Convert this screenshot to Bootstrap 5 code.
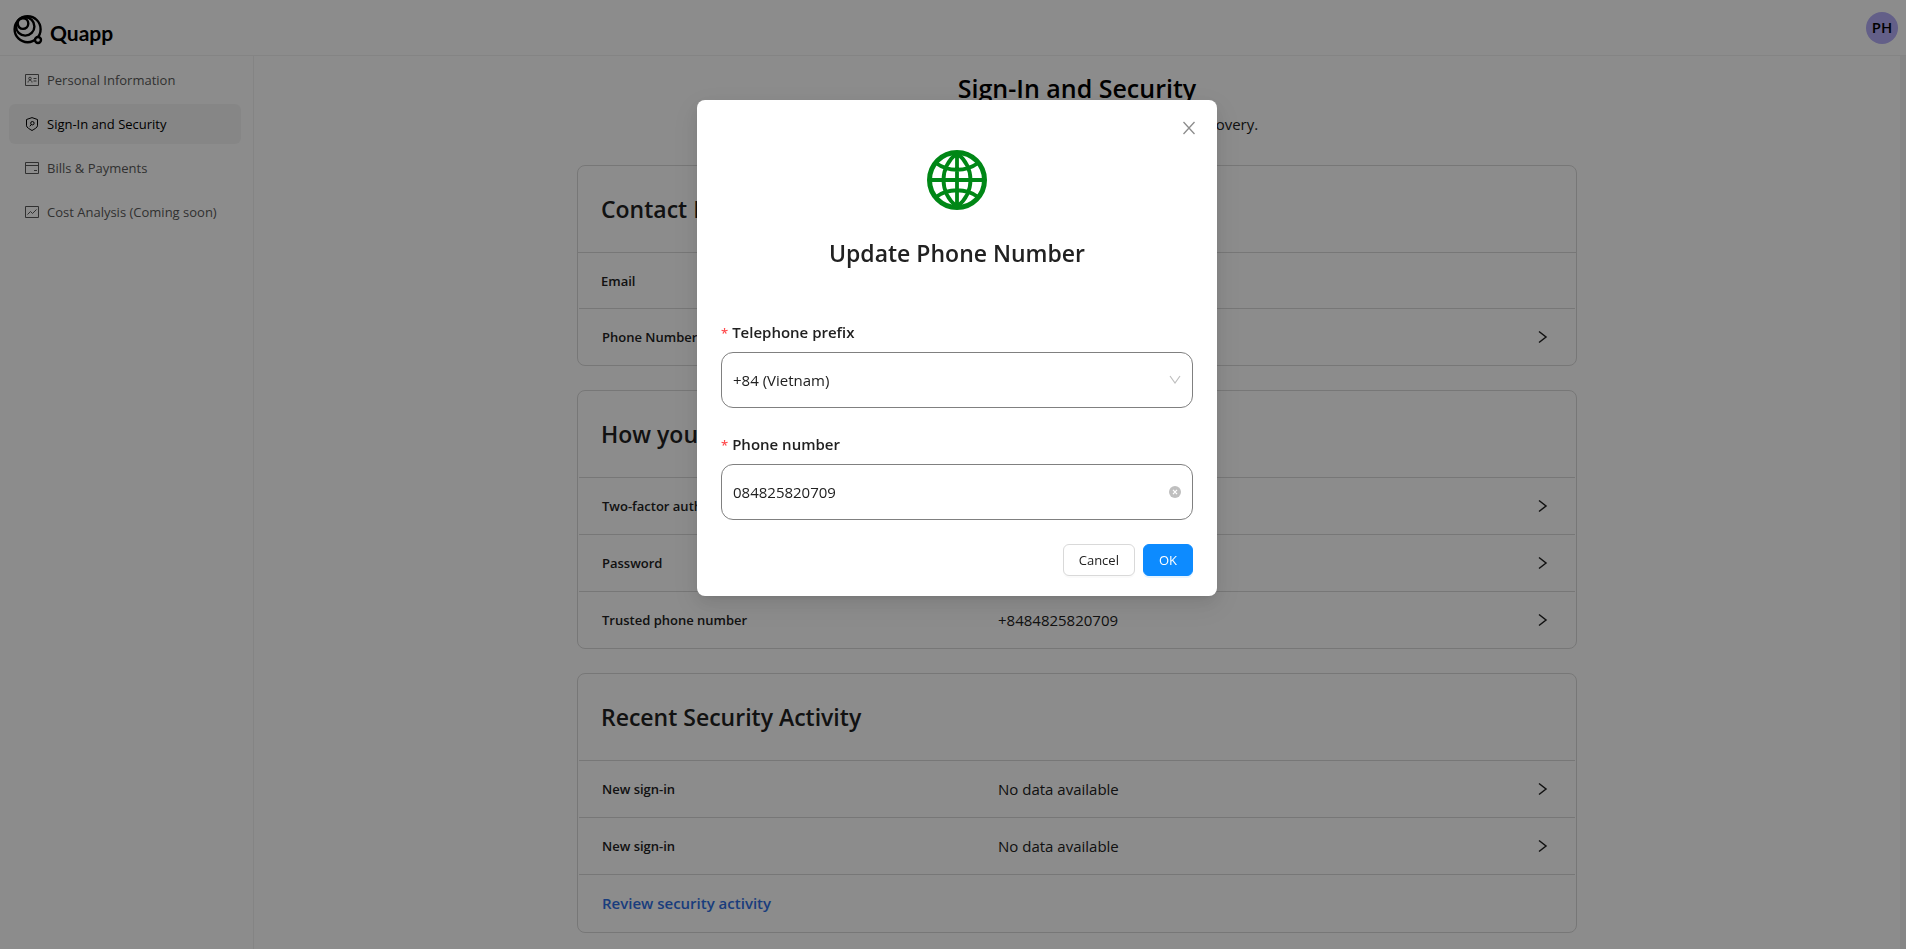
<!DOCTYPE html>
<html lang="en">
<head>
<meta charset="utf-8">
<meta name="viewport" content="width=device-width, initial-scale=1">
<title>Quapp – Sign-In and Security</title>
<link href="https://cdn.jsdelivr.net/npm/bootstrap@5.3.0/dist/css/bootstrap.min.css" rel="stylesheet">
<style>
  body { font-family: "Open Sans", "Noto Sans", sans-serif; font-size: 15px; line-height: 24px; color: #212121; background: #fff; }
  .topbar { height: 56px; border-bottom: 1px solid #f0f0f0; padding: 0 8px 0 13px; }
  .brand { gap: 7px; }
  .brand-mark { width: 30px; height: 30px; }
  .brand-name { font-family: Lato, sans-serif; font-size: 21px; font-weight: 700; line-height: 32px; padding-top: 7px; color: #000; }
  .avatar { width: 32px; height: 32px; background: #b4aef8; color: #000; font-weight: 600; font-size: 15px; }
  .shell { height: calc(100vh - 56px); }
  .side { width: 254px; border-right: 1px solid #f0f0f0; padding: 4px 12px 0 9px; }
  .side .nav-link { height: 40px; padding: 0 16px; gap: 8px; border-radius: 6px; font-size: 13px; color: #595959; }
  .side .nav-link.active { background: #f5f5f5; color: #000; }
  .side svg { width: 14px; height: 14px; }
  .content-pane { padding: 16px 24px 0; overflow: hidden; }
  .scroll-track { width: 6px; background: #f5f5f5; }
  .sections { max-width: 1000px; }
  .page-title { font-size: 25px; line-height: 32px; font-weight: 600; color: #000; }
  .page-note { margin: 0; padding-bottom: 5px; }
  .section-box { border: 1px solid #d9d9d9; border-radius: 8px; }
  .section-box h2 { font-size: 23px; line-height: 32px; font-weight: 600; padding: 27px 23px; margin: 0; }
  .rows { padding: 0 1px; }
  .setting { height: 57px; padding: 0 23px; border-top: 1px solid #d9d9d9; color: inherit; text-decoration: none; }
  .setting-fixed { height: 56px; }
  .setting-last { height: 58px; padding-bottom: 1px; }
  .setting .name { font-size: 13px; font-weight: 600; flex: 0 0 396px; }
  .setting svg { width: 16px; height: 16px; margin-right: 1px; }
  .review { font-size: 15px; font-weight: 600; color: #2f6fe4; text-decoration: none; }
  .modal-backdrop { --bs-backdrop-opacity: .45; }
  .modal { padding-left: 8px; overflow: hidden; }
  .modal-dialog { max-width: 520px; margin-top: 100px; }
  .modal-content { border: 0; border-radius: 8px; padding: 50px 24px 20px; color: #212121; box-shadow: 0 6px 16px rgba(0,0,0,.08), 0 3px 6px -4px rgba(0,0,0,.12), 0 9px 28px 8px rgba(0,0,0,.05); }
  .dismiss { position: absolute; top: 17px; right: 17px; width: 22px; height: 22px; color: #8c8c8c; }
  .modal-title { font-size: 23px; line-height: 32px; font-weight: 600; margin: 27px 0 51px; }
  .globe { width: 60px; height: 60px; }
  .form-label { font-weight: 600; margin-bottom: 8px; }
  .star { color: #ff4d4f; font-size: 13px; line-height: 1; margin-right: 4px; }
  .field { display: block; height: 56px; border: 1px solid #808080; border-radius: 12px; padding: 0 11px; font-size: 15px; color: #212121; background: #fff; width: 100%; appearance: none; }
  .field-icon { position: absolute; right: 12px; top: 22px; width: 12px; height: 12px; }
  .act { height: 32px; padding: 0 15px; border-radius: 6px; font-size: 13px; line-height: 20px; }
  .act-plain { border: 1px solid #d9d9d9; background: #fff; color: #212121; box-shadow: 0 2px 0 rgba(0,0,0,.02); }
  .act-main { border: 1px solid #0d8bff; background: #0d8bff; color: #fff; box-shadow: 0 2px 0 rgba(5,145,255,.1); }
</style>
</head>
<body class="vh-100 overflow-hidden">
<svg class="d-none">
  <symbol id="chev" viewBox="0 0 16 16"><path d="M4 2.500l7 5.500-7 5.500" fill="none" stroke="currentColor" stroke-width="1.500"/></symbol>
</svg>

<header class="topbar d-flex align-items-center justify-content-between">
  <a href="#" class="brand d-flex align-items-center pt-1 text-decoration-none" aria-label="Quapp home">
    <svg class="brand-mark" viewBox="0 0 30 30" fill="none" stroke="#000" stroke-width="2.400">
      <circle cx="14.600" cy="14.200" r="13"/><circle cx="12.200" cy="11.400" r="9.200"/><circle cx="10" cy="8.600" r="5.300"/><circle cx="25" cy="25" r="3" fill="#fff"/>
    </svg>
    <span class="brand-name">Quapp</span>
  </a>
  <button type="button" class="avatar btn rounded-circle p-0 border-0 d-flex align-items-center justify-content-center">PH</button>
</header>

<div class="shell d-flex">
  <nav class="side flex-shrink-0">
    <ul class="nav flex-column gap-1">
      <li><a href="#" class="nav-link d-flex align-items-center">
        <svg viewBox="0 0 14 14" fill="none" stroke="currentColor"><path d="M.5 1.500h13v11H.5zM8.500 5.500h3M8.500 8h3M3 9.500c0-3 4-3 4 0"/><circle cx="5" cy="5.500" r="1.300"/></svg>Personal Information</a></li>
      <li><a href="#" class="nav-link active d-flex align-items-center" aria-current="page">
        <svg viewBox="0 0 14 14" fill="none" stroke="currentColor"><path d="M7 .6l5.500 1.900v6.300c0 1.500-3 3.300-5.500 4.700-2.500-1.400-5.500-3.200-5.500-4.700V2.500zM6.300 7.500L4.800 9.300"/><circle cx="7.400" cy="6.200" r="1.700"/></svg>Sign-In and Security</a></li>
      <li><a href="#" class="nav-link d-flex align-items-center">
        <svg viewBox="0 0 14 14" fill="none" stroke="currentColor"><path d="M.5 1.500h13v11H.5zM.5 4.500h13M9 9.500h3"/></svg>Bills &amp; Payments</a></li>
      <li><a href="#" class="nav-link d-flex align-items-center">
        <svg viewBox="0 0 14 14" fill="none" stroke="currentColor"><path d="M.5 1.500h13v11H.5zM2.500 9.500l3-3 2 2L11.500 4.500"/></svg>Cost Analysis (Coming soon)</a></li>
    </ul>
  </nav>

  <main class="content-pane flex-grow-1">
    <div class="sections mx-auto d-flex flex-column gap-4">
      <div class="text-center">
        <h1 class="page-title mb-2">Sign-In and Security</h1>
        <p class="page-note">Manage your sign-in, security and account recovery.</p>
      </div>

      <section class="section-box">
        <h2>Contact Info</h2>
        <div class="setting setting-fixed d-flex align-items-center"><span class="name">Email</span></div>
        <div class="rows">
          <a href="#" class="setting d-flex align-items-center"><span class="name">Phone Number</span><span class="flex-grow-1">+8484825820709</span><svg><use href="#chev"/></svg></a>
        </div>
      </section>

      <section class="section-box">
        <h2>How you sign in</h2>
        <div class="rows">
          <a href="#" class="setting d-flex align-items-center"><span class="name">Two-factor authentication</span><span class="flex-grow-1"></span><svg><use href="#chev"/></svg></a>
          <a href="#" class="setting d-flex align-items-center"><span class="name">Password</span><span class="flex-grow-1"></span><svg><use href="#chev"/></svg></a>
          <a href="#" class="setting d-flex align-items-center"><span class="name">Trusted phone number</span><span class="flex-grow-1">+8484825820709</span><svg><use href="#chev"/></svg></a>
        </div>
      </section>

      <section class="section-box">
        <h2>Recent Security Activity</h2>
        <div class="rows">
          <a href="#" class="setting d-flex align-items-center"><span class="name">New sign-in</span><span class="flex-grow-1">No data available</span><svg><use href="#chev"/></svg></a>
          <a href="#" class="setting d-flex align-items-center"><span class="name">New sign-in</span><span class="flex-grow-1">No data available</span><svg><use href="#chev"/></svg></a>
          <div class="setting setting-last d-flex align-items-center"><a href="#" class="review">Review security activity</a></div>
        </div>
      </section>
    </div>
  </main>
  <div class="scroll-track flex-shrink-0"></div>
</div>

<div class="modal-backdrop show"></div>
<div class="modal d-block" role="dialog" aria-modal="true" aria-labelledby="dlgTitle">
  <div class="modal-dialog mx-auto mb-0">
    <form class="modal-content">
      <button type="button" class="dismiss btn p-0 border-0 d-flex align-items-center justify-content-center" aria-label="Close">
        <svg width="14" height="14" viewBox="0 0 14 14" stroke="currentColor" stroke-width="1.300"><path d="M1.500 1l11 12M12.500 1l-11 12"/></svg>
      </button>
      <div class="text-center">
        <svg class="globe d-block mx-auto" viewBox="0 0 60 60" fill="none" stroke="#008716" stroke-width="3.800">
          <circle cx="30" cy="30" r="27.500" stroke-width="5"/>
          <path d="M30 3v54M3 30h54M30 3C12 18 12 42 30 57M30 3c18 15 18 39 0 54M9 13c12 9 30 9 42 0M9 47c12-9 30-9 42 0"/>
        </svg>
        <h2 class="modal-title" id="dlgTitle">Update Phone Number</h2>
      </div>
      <div class="mb-4">
        <label class="form-label d-block" for="prefix"><span class="star">*</span>Telephone prefix</label>
        <div class="position-relative">
          <select class="field" id="prefix"><option>+84 (Vietnam)</option></select>
          <svg class="field-icon" viewBox="0 0 12 12" fill="none" stroke="#bfbfbf" stroke-width="1.200"><path d="M1 2l5 7 5-7"/></svg>
        </div>
      </div>
      <div class="mb-4">
        <label class="form-label d-block" for="phone"><span class="star">*</span>Phone number</label>
        <div class="position-relative">
          <input class="field" id="phone" type="tel" value="084825820709">
          <svg class="field-icon" viewBox="0 0 12 12"><circle cx="6" cy="6" r="6" fill="#bfbfbf"/><path d="M4 3.800l4 4.400M8 3.800L4 8.200" stroke="#fff" stroke-width="1.200"/></svg>
        </div>
      </div>
      <div class="d-flex justify-content-end gap-2">
        <button type="button" class="act act-plain">Cancel</button>
        <button type="submit" class="act act-main">OK</button>
      </div>
    </form>
  </div>
</div>
<script src="https://cdn.jsdelivr.net/npm/bootstrap@5.3.0/dist/js/bootstrap.bundle.min.js"></script>
</body>
</html>
